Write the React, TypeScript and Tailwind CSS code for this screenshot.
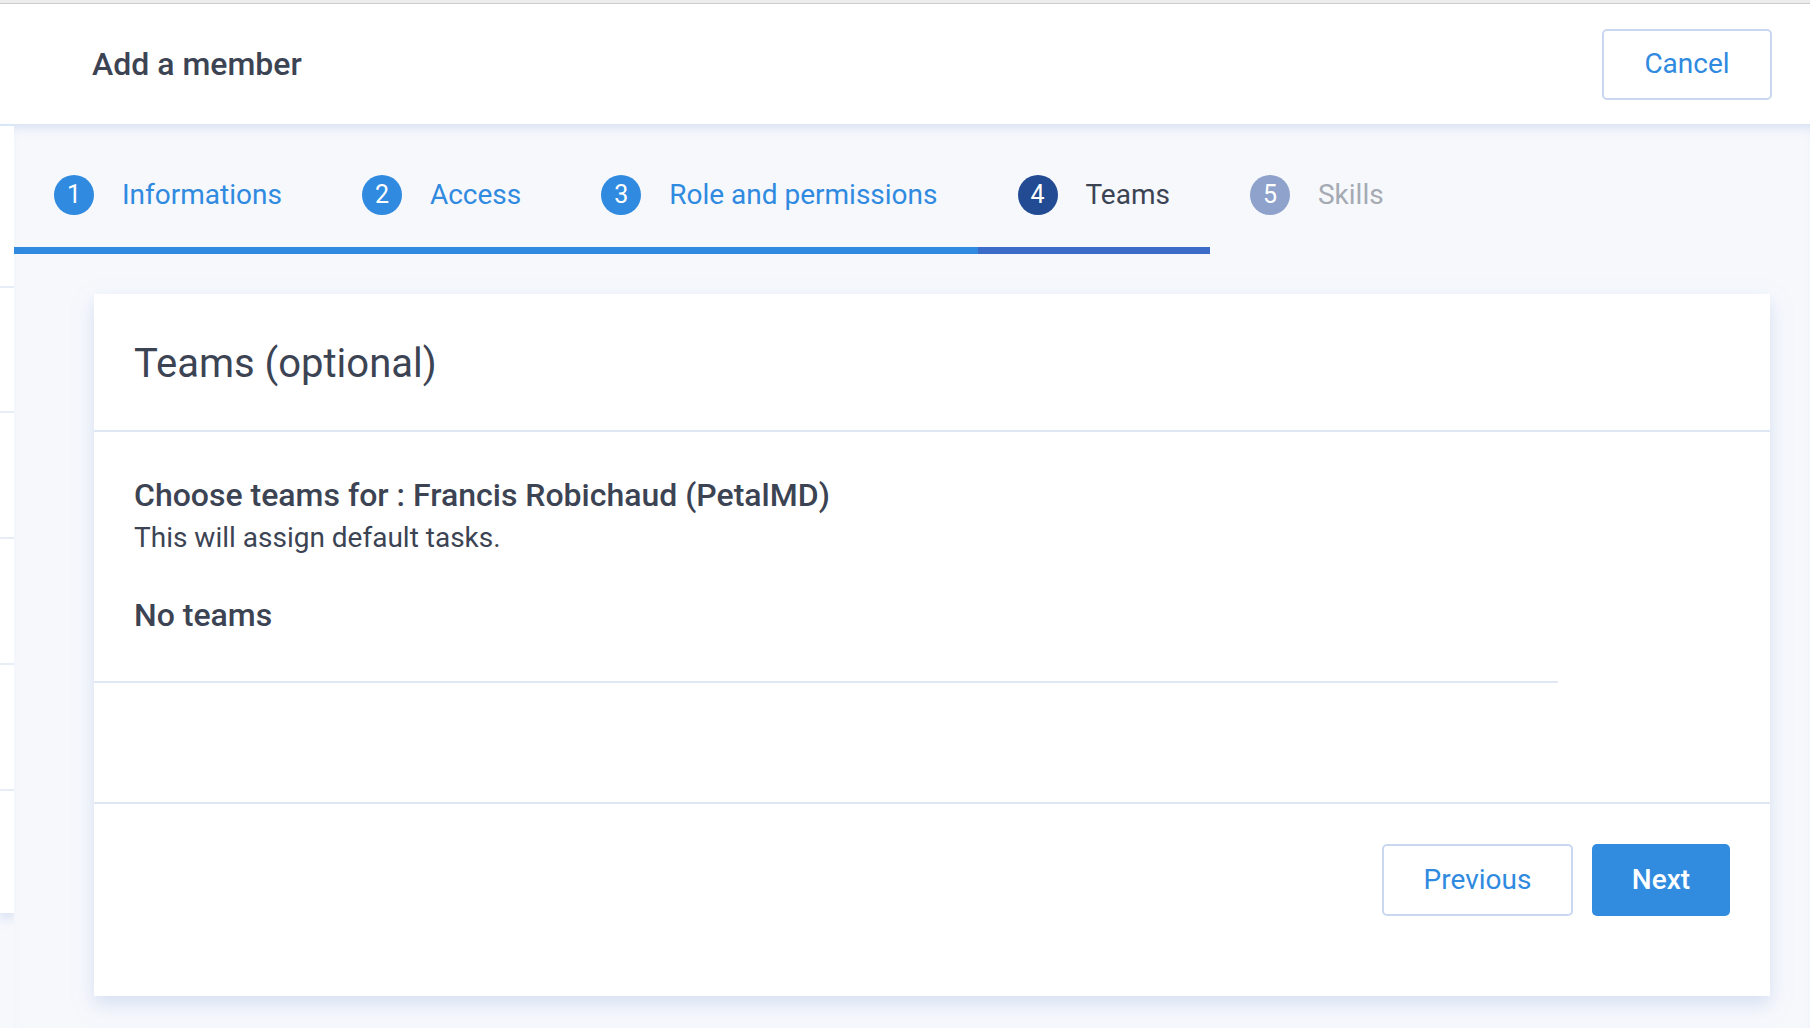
import React from 'react'

const STEPS = [
  { n: 1, label: 'Informations', state: 'done' },
  { n: 2, label: 'Access', state: 'done' },
  { n: 3, label: 'Role and permissions', state: 'done' },
  { n: 4, label: 'Teams', state: 'active' },
  { n: 5, label: 'Skills', state: 'todo' },
]

function Step({ n, label, state }: { n: number; label: string; state: string }) {
  const circle =
    state === 'done' ? 'bg-[#2f8ae0]' : state === 'active' ? 'bg-[#224b93]' : 'bg-[#8fa2cb]'
  const text =
    state === 'done' ? 'text-[#2f8ae0]' : state === 'active' ? 'text-[#3c4454]' : 'text-[#a5aab3]'
  const bar =
    state === 'done' ? 'bg-[#2f8ae0]' : state === 'active' ? 'bg-[#3b6cc8]' : 'bg-transparent'

  return (
    <div className="flex flex-col">
      <div className="flex items-center gap-[28px] px-10">
        <span className={`flex h-10 w-10 items-center justify-center rounded-full text-[25px] text-white ${circle}`}>
          {n}
        </span>
        <span className={`text-[28px] leading-[40px] ${text}`}>{label}</span>
      </div>
      <div className={`mt-[32px] h-[7px] ${bar}`} />
    </div>
  )
}

export default function App() {
  return (
    <div
      className="flex h-[1028px] w-full flex-col overflow-hidden bg-white"
      style={{ fontFamily: 'Roboto, "Noto Sans", sans-serif' }}
    >
      <div className="h-[4px] border-b border-[#cdcdcd] bg-[#ececec]" />

      {/* header */}
      <div className="flex h-[120px] items-center justify-between bg-white pl-[92px] pr-[38px]">
        <h1 className="text-[32px] font-medium text-[#3c4454]">Add a member</h1>
        <button className="h-[71px] w-[170px] rounded-[5px] border-2 border-[#c9d8f0] bg-white text-[28px] text-[#2f8ae0]">
          Cancel
        </button>
      </div>

      <div className="flex flex-1">
        {/* page behind the panel */}
        <div className="flex w-[14px] flex-col bg-[#f6f8fc]">
          <div className="bg-white shadow-[0_6px_10px_rgba(200,212,238,0.6)]">
            <div className="h-[2px] bg-[#d6e8f8]" />
            <div className="h-[162px] border-b-2 border-[#e6edf7]" />
            <div className="h-[125px] border-b-2 border-[#e6edf7]" />
            <div className="h-[126px] border-b-2 border-[#e6edf7]" />
            <div className="h-[126px] border-b-2 border-[#e6edf7]" />
            <div className="h-[126px] border-b-2 border-[#e6edf7]" />
            <div className="h-[122px]" />
          </div>
        </div>

        {/* panel */}
        <div className="flex flex-1 flex-col bg-[#f6f8fc] shadow-[inset_0_10px_12px_-8px_rgba(190,204,234,0.7)]">
          <div className="flex pt-[51px]">
            {STEPS.map(s => (
              <Step key={s.n} {...s} />
            ))}
          </div>

          <div className="ml-[80px] mr-[40px] mt-[40px] flex h-[702px] flex-col bg-white shadow-[0_8px_16px_rgba(190,204,234,0.55)]">
            <div className="flex h-[138px] items-center border-b-2 border-[#dfe6f4] pl-10 pt-[4px]">
              <h2 className="text-[40px] text-[#3c4454]">Teams (optional)</h2>
            </div>

            <div className="mr-[212px] border-b-2 border-[#dfe6f4] pb-[46px] pl-10 pt-[44px] text-[#3c4454]">
              <p className="text-[32px] font-medium leading-[38px]">Choose teams for : Francis Robichaud (PetalMD)</p>
              <p className="mt-[6px] text-[28px] leading-[36px]">This will assign default tasks.</p>
              <p className="mt-[39px] text-[32px] font-medium leading-[40px]">No teams</p>
            </div>

            <div className="h-[119px]" />

            <div className="flex flex-1 items-start justify-end gap-[19px] border-t-2 border-[#dfe6f4] pr-10 pt-10">
              <button className="h-[72px] w-[191px] rounded-[5px] border-2 border-[#c9d8f0] bg-white text-[28px] text-[#2f8ae0]">
                Previous
              </button>
              <button className="h-[72px] w-[138px] rounded-[5px] bg-[#318ce0] text-[28px] font-medium text-white">
                Next
              </button>
            </div>
          </div>
        </div>
      </div>
    </div>
  )
}
